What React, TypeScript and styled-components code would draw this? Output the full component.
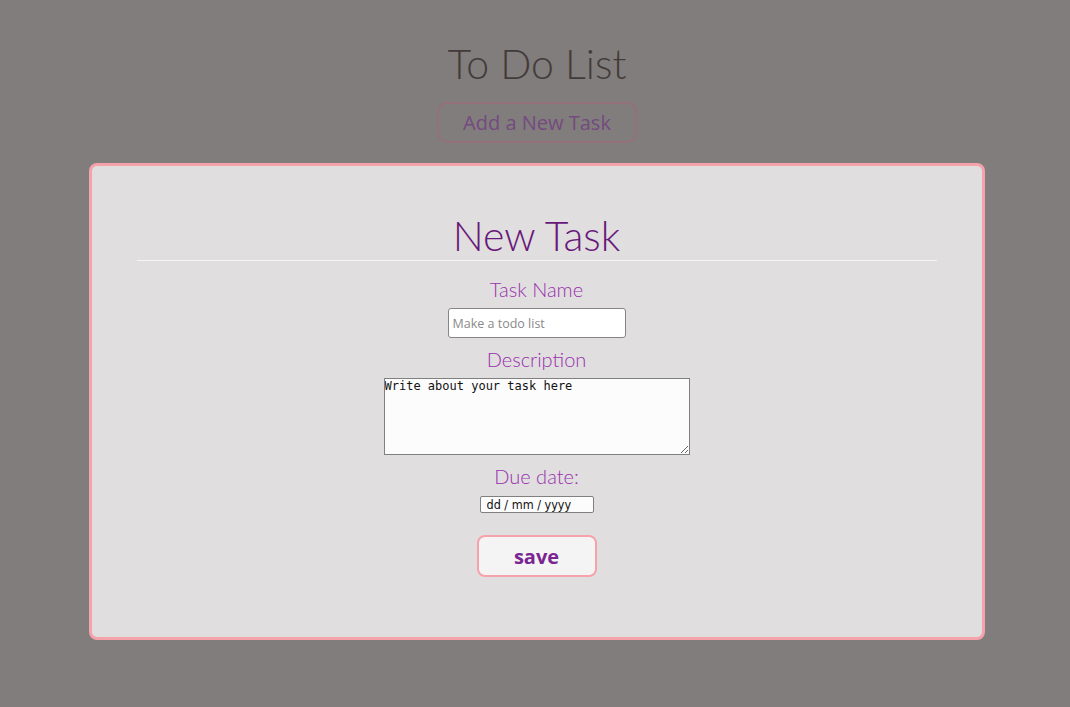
import styled, { createGlobalStyle } from "styled-components";

const GlobalStyle = createGlobalStyle`
  body {
    margin: 0;
    background-color: #817d7c;
    font-family: "Lato", "Open Sans", sans-serif;
  }
`;

const Page = styled.div`
  display: flex;
  flex-direction: column;
  align-items: center;
  min-height: 707px;
  padding-top: 40px;
  box-sizing: border-box;
`;

const Title = styled.h1`
  font-family: "Lato", sans-serif;
  font-weight: 300;
  font-size: 41px;
  line-height: 48px;
  color: #433b39;
  margin: 0 0 14px 4px;
`;

const AddButton = styled.button`
  width: 200px;
  height: 41px;
  margin-left: 4px;
  border: 2px solid #95707a;
  border-radius: 10px;
  background: transparent;
  color: #744a80;
  font-family: "Open Sans", sans-serif;
  font-size: 20px;
  cursor: pointer;
`;

const Modal = styled.div`
  width: 896px;
  height: 477px;
  box-sizing: border-box;
  margin: 20px 0 0 3px;
  border: 3px solid #f6a2aa;
  border-radius: 8px;
  background-color: #e0dede;
  display: flex;
  flex-direction: column;
  align-items: center;
  padding: 0 45px;
`;

const ModalTitle = styled.h2`
  font-family: "Lato", sans-serif;
  font-weight: 300;
  font-size: 41px;
  line-height: 48px;
  color: #68187a;
  margin: 46px 0 0 0;
`;

const Rule = styled.hr`
  align-self: stretch;
  border: none;
  border-top: 1px solid #f6f5f5;
  margin: 0 0 16px 0;
`;

const Label = styled.label`
  font-family: "Lato", sans-serif;
  font-weight: 300;
  font-size: 20px;
  line-height: 24px;
  color: #9a30b0;
  margin-bottom: 7px;
`;

const TextInput = styled.input`
  width: 178px;
  height: 30px;
  box-sizing: border-box;
  border: 1px solid #858585;
  border-radius: 3px;
  background: #fff;
  padding: 0 4px;
  font-family: "Open Sans", sans-serif;
  font-size: 12.5px;
  margin-bottom: 9px;
  &::placeholder {
    color: #8a8a8a;
  }
`;

const TextArea = styled.textarea`
  width: 306px;
  height: 77px;
  box-sizing: border-box;
  border: 1px solid #808080;
  background: #fcfcfc;
  padding: 0;
  font-family: "DejaVu Sans Mono", monospace;
  font-size: 12px;
  color: #111;
  margin-bottom: 9px;
`;

const DateInput = styled.input`
  width: 114px;
  height: 17px;
  box-sizing: border-box;
  border: 1px solid #808080;
  border-radius: 2px;
  background: #fcfcfc;
  padding: 0 6px;
  font-family: "DejaVu Sans Condensed", "DejaVu Sans", sans-serif;
  font-size: 12.5px;
  color: #111;
  margin: 1px 0 22px 0;
  &::placeholder {
    color: #111;
  }
`;

const SaveButton = styled.button`
  width: 120px;
  height: 42px;
  border: 2px solid #f6a2aa;
  border-radius: 8px;
  background-color: #f5f4f5;
  color: #7a2592;
  font-family: "Open Sans", sans-serif;
  font-weight: 700;
  font-size: 20px;
  cursor: pointer;
`;

export default function App() {
  return (
    <>
      <GlobalStyle />
      <Page>
        <Title>To Do List</Title>
        <AddButton>Add a New Task</AddButton>
        <Modal>
          <ModalTitle>New Task</ModalTitle>
          <Rule />
          <Label htmlFor="name">Task Name</Label>
          <TextInput id="name" placeholder="Make a todo list" />
          <Label htmlFor="desc">Description</Label>
          <TextArea id="desc" defaultValue="Write about your task here" />
          <Label htmlFor="due">Due date:</Label>
          <DateInput id="due" type="text" placeholder="dd / mm / yyyy" />
          <SaveButton>save</SaveButton>
        </Modal>
      </Page>
    </>
  );
}
